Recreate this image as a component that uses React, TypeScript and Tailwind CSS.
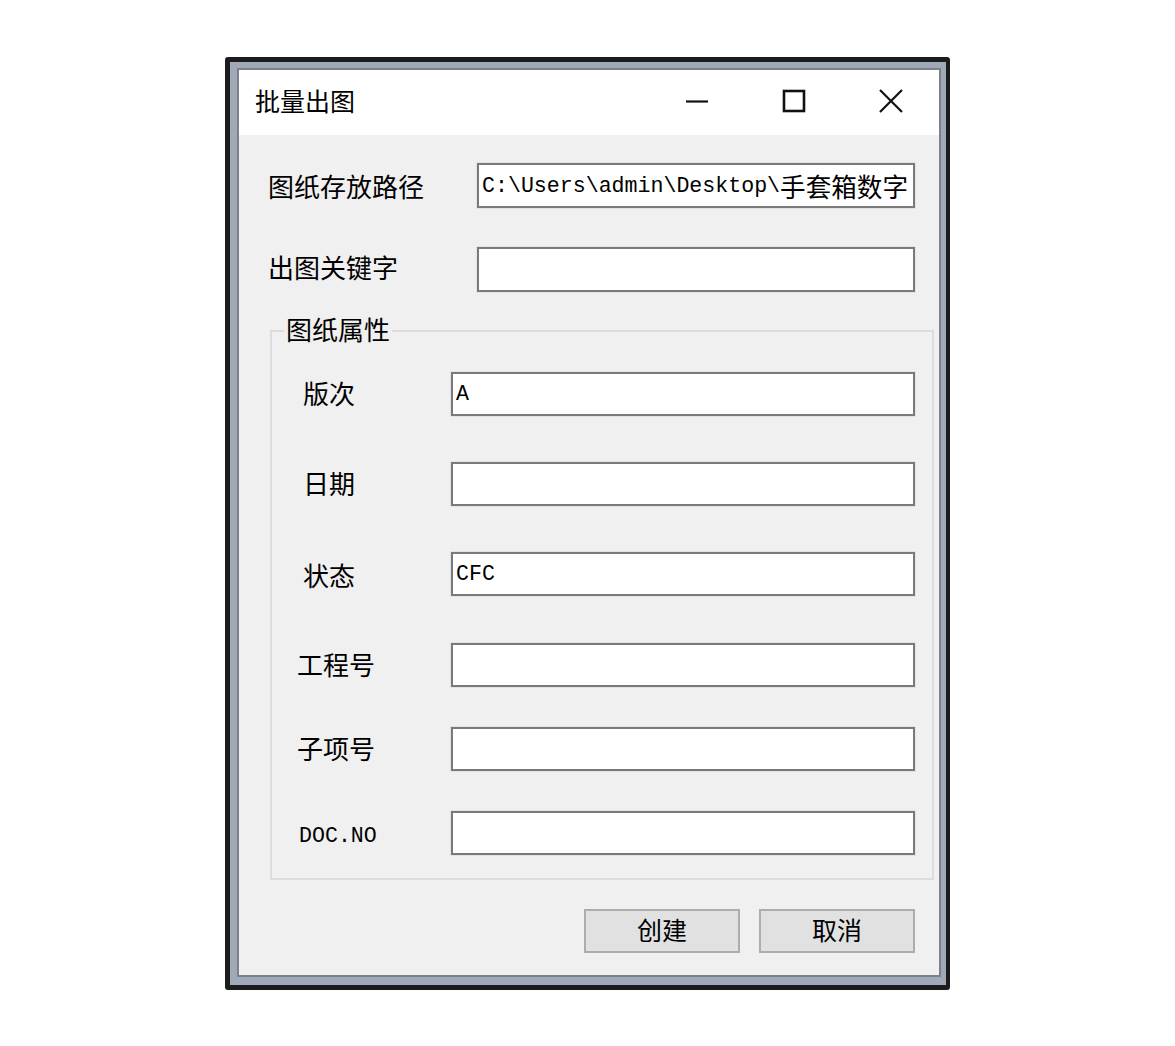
import React from "react";

const cjk = '"Noto Sans CJK SC", "Noto Sans", sans-serif';

// Windows-style text box (sunken gray border, white fill)
const TextBox = ({ className = "", children }: { className?: string; children?: React.ReactNode }) => (
  <div
    className={`h-[44px] border-2 border-[#7a7a7a] bg-white pl-[3px] flex items-center overflow-hidden whitespace-nowrap text-black outline outline-1 outline-[#e3e3e3] ${className}`}
  >
    {children}
  </div>
);

const MonoText = ({ children }: { children: React.ReactNode }) => (
  <span className="font-['Liberation_Mono',monospace] text-[21.6px] leading-none pt-[2px]">{children}</span>
);

const fields = [
  { label: "版次", value: "A", pl: "pl-[31px]", mt: "mt-[25px]", dy: "" },
  { label: "日期", value: "", pl: "pl-[31px]", mt: "mt-[46px]", dy: "" },
  { label: "状态", value: "CFC", pl: "pl-[31px]", mt: "mt-[46px]", dy: "pt-[5px]" },
  { label: "工程号", value: "", pl: "pl-[25px]", mt: "mt-[47px]", dy: "" },
  { label: "子项号", value: "", pl: "pl-[25px]", mt: "mt-[40px]", dy: "pt-[1px]" },
  { label: "DOC.NO", value: "", pl: "pl-[27px]", mt: "mt-[40px]", dy: "pt-[7px]", mono: true },
];

const App = () => {
  return (
    <div className="w-[1175px] h-[1046px] bg-white pt-[57px]" style={{ fontFamily: cjk }}>
      {/* window frame */}
      <div className="mx-auto w-[725px] h-[933px] bg-[#1c1c1c] pt-[5px] pb-[5px] pl-[5px] pr-[4px] rounded-[3px]">
        <div className="h-full bg-[#9fa9b8] pt-[6px] pb-[8px] pl-[7px] pr-[5px]">
          <div className="h-full border-2 border-[#7b8089] flex flex-col">
            {/* title bar */}
            <div className="h-[65px] bg-white flex items-center pb-[4px]">
              <span className="pl-[16px] text-[25px] text-black flex-1 leading-none">批量出图</span>
              <div className="w-[97px] h-full flex items-center justify-center">
                <svg width="24" height="24" viewBox="0 0 24 24">
                  <path d="M1 12.5H23" stroke="#111" strokeWidth="2.2" />
                </svg>
              </div>
              <div className="w-[97px] h-full flex items-center justify-center">
                <svg width="24" height="24" viewBox="0 0 24 24">
                  <rect x="2" y="2" width="20" height="20" fill="none" stroke="#111" strokeWidth="2.6" />
                </svg>
              </div>
              <div className="w-[97px] h-full flex items-center justify-center">
                <svg width="26" height="26" viewBox="0 0 26 26">
                  <path d="M2 2L24 24M24 2L2 24" stroke="#111" strokeWidth="2.2" />
                </svg>
              </div>
            </div>

            {/* body */}
            <div className="flex-1 bg-[#f0f0f0] flex flex-col pt-[28px]">
              <div className="flex items-center">
                <span className="pl-[29px] w-[238px] text-[26px] text-black leading-none">图纸存放路径</span>
                <TextBox className="w-[438px] h-[45px]">
                  <MonoText>C:\Users\admin\Desktop\</MonoText>
                  <span className="text-[25.6px] leading-none">手套箱数字</span>
                </TextBox>
              </div>
              <div className="flex items-center mt-[39px]">
                <span className="pl-[29px] w-[238px] text-[26px] text-black leading-none pb-[6px]">出图关键字</span>
                <TextBox className="w-[438px] h-[45px]" />
              </div>

              {/* group box */}
              <fieldset className="ml-[31px] w-[664px] mt-[22px] border-2 border-[#dcdcdc] pb-[23px]">
                <legend className="ml-[12px] px-[2px] text-[26px] leading-[30px] text-black pb-[3px]">图纸属性</legend>
                {fields.map((f) => (
                  <div key={f.label} className={`flex items-center ${f.mt}`}>
                    <div className={`w-[179px] ${f.pl} ${f.dy}`}>
                      {f.mono ? (
                        <span className="font-['Liberation_Mono',monospace] text-[21.6px] text-black">{f.label}</span>
                      ) : (
                        <span className="text-[26px] text-black leading-none">{f.label}</span>
                      )}
                    </div>
                    <TextBox className="w-[464px]">{f.value && <MonoText>{f.value}</MonoText>}</TextBox>
                  </div>
                ))}
              </fieldset>

              {/* buttons */}
              <div className="flex justify-end gap-[19px] pr-[24px] mt-[29px]">
                <button className="w-[156px] h-[44px] bg-[#e1e1e1] border-2 border-[#adadad] text-[25px] text-black leading-none pb-[4px]">
                  创建
                </button>
                <button className="w-[156px] h-[44px] bg-[#e1e1e1] border-2 border-[#adadad] text-[25px] text-black leading-none pb-[4px]">
                  取消
                </button>
              </div>
            </div>
          </div>
        </div>
      </div>
    </div>
  );
};

export default App;
